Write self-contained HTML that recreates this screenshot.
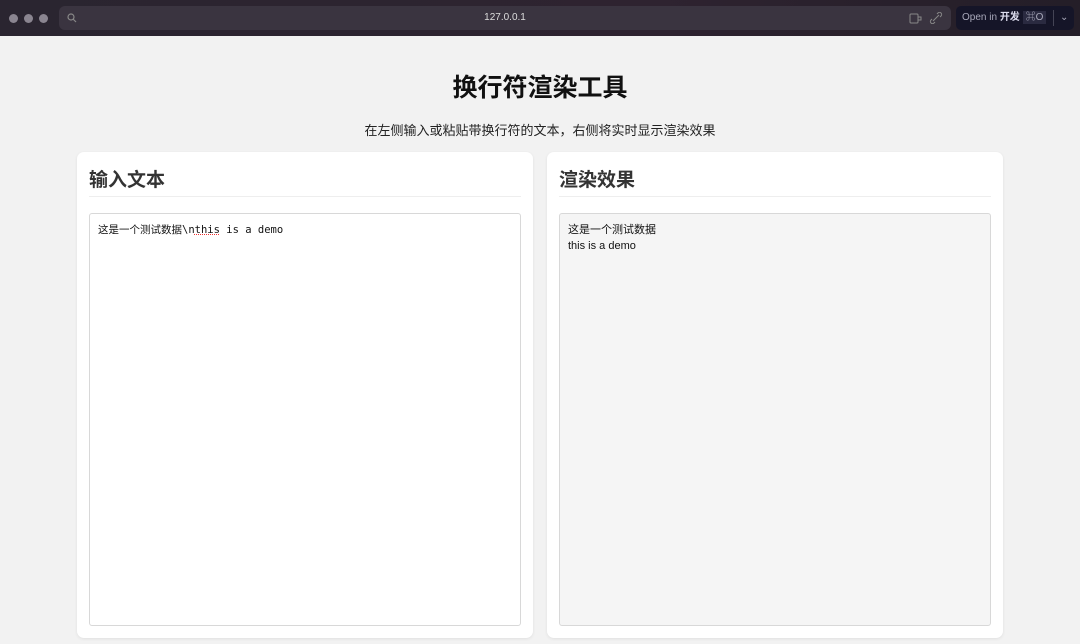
<!DOCTYPE html>
<html><head><meta charset="utf-8"><style>
*{box-sizing:border-box;margin:0;padding:0}
body{width:1080px;height:644px;overflow:hidden;background:#f2f2f2;font-family:"Liberation Sans","Noto Sans CJK SC",sans-serif;position:relative}
.bar{position:absolute;left:0;top:0;width:1080px;height:36px;background:linear-gradient(90deg,#2a2530,#2e2330 60%,#241e28);}
.dot{position:absolute;top:14px;width:9px;height:9px;border-radius:50%;background:#8a8590}
.url{position:absolute;left:59px;top:6px;width:892px;height:24px;border-radius:6px;background:#3a3440;color:#ddd;font-size:10px;text-align:center;line-height:24px}
.open{position:absolute;left:956px;top:6px;width:118px;height:24px;border-radius:5px;background:#151528;color:#aab;font-size:10px;line-height:24px;padding-left:6px;white-space:nowrap}
h1{position:absolute;top:68px;left:0;width:1080px;text-align:center;font-size:25px;font-weight:bold;color:#111}
.sub{position:absolute;top:120px;left:0;width:1080px;text-align:center;font-size:13px;color:#222}
.card{position:absolute;top:152px;width:456px;height:486px;background:#fff;border-radius:7px;box-shadow:0 1px 3px rgba(0,0,0,.08)}
.card h2{position:absolute;left:12px;top:13px;font-size:19px;font-weight:bold;color:#333}
.card .hr{position:absolute;left:12px;right:12px;top:44px;border-top:1px solid #eee}
.box{position:absolute;left:12px;right:12px;top:61px;height:413px;border:1px solid #d8d8d8;border-radius:3px;padding:8px;font-size:11px;line-height:16px;color:#111}
</style></head><body>
<div class="bar">
<div class="dot" style="left:9px"></div><div class="dot" style="left:24px"></div><div class="dot" style="left:39px"></div>
<div class="url"><svg style="position:absolute;left:8px;top:7px" width="10" height="10" viewBox="0 0 10 10"><circle cx="4" cy="4" r="3" fill="none" stroke="#888" stroke-width="1.2"/><path d="M6 6l3 3" stroke="#888" stroke-width="1.2"/></svg>127.0.0.1<svg style="position:absolute;right:8px;top:6px" width="34" height="12" viewBox="0 0 34 12"><rect x="1" y="2" width="8" height="9" rx="1" fill="none" stroke="#888"/><path d="M9 5h3v3H9" fill="none" stroke="#888"/><path d="M24 9l6-6M23 7l-1 1a2 2 0 003 3l1-1M31 5l1-1a2 2 0 00-3-3l-1 1" fill="none" stroke="#888"/></svg></div>
<div class="open">Open in <b style="color:#dde">开发</b> <span style="background:#2a2a40;padding:1px 3px">⌘O</span><span style="position:absolute;left:97px;top:4px;height:16px;border-left:1px solid #445"></span><span style="position:absolute;left:104px;top:0">⌄</span></div>
</div>
<h1>换行符渲染工具</h1>
<div class="sub">在左侧输入或粘贴带换行符的文本，右侧将实时显示渲染效果</div>
<div class="card" style="left:77px"><h2>输入文本</h2><div class="hr"></div>
<div class="box" style="font-family:'DejaVu Sans Mono','Noto Sans CJK SC',monospace;font-size:10.5px">这是一个测试数据\n<span style="text-decoration:underline dotted #e33">this</span> is a demo</div></div>
<div class="card" style="left:547px"><h2>渲染效果</h2><div class="hr"></div>
<div class="box" style="background:#f5f5f5">这是一个测试数据<br>this is a demo</div></div>
</body></html>
